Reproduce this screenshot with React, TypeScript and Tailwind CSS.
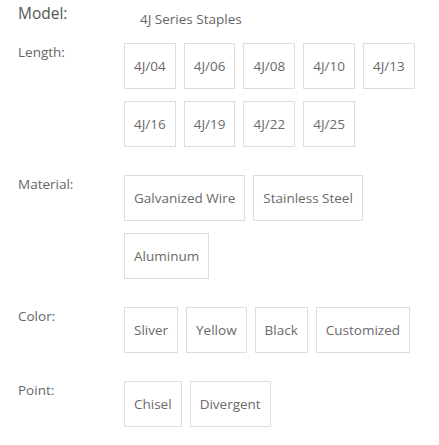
import React from 'react';

const groups = [
    { label: 'Length:', options: ['4J/04', '4J/06', '4J/08', '4J/10', '4J/13', '4J/16', '4J/19', '4J/22', '4J/25'] },
    { label: 'Material:', options: ['Galvanized Wire', 'Stainless Steel', 'Aluminum'] },
    { label: 'Color:', options: ['Sliver', 'Yellow', 'Black', 'Customized'] },
    { label: 'Point:', options: ['Chisel', 'Divergent'] },
];

export default function App() {
    return (
        <div className="min-h-[445px] w-[439px] bg-white pt-[2px] pl-[18px] font-['Open_Sans',sans-serif]">
            {/* Model */}
            <div className="flex items-start mb-[15px]">
                <div className="w-[106px] text-[15.5px] leading-[22px] text-[#555]">Model:</div>
                <div className="mt-[8px] pl-[16px] text-[13.5px] leading-[18px] text-[#666]">4J Series Staples</div>
            </div>

            {groups.map((group) => (
                <div key={group.label} className="flex items-start mb-[28px]">
                    <div className="w-[106px] shrink-0 text-[13.5px] leading-[18px] text-[#666]">{group.label}</div>
                    <div className="flex flex-1 flex-wrap gap-x-2 gap-y-3 pr-[10px]">
                        {group.options.map((opt) => (
                            <div
                                key={opt}
                                className="h-[46px] flex items-center px-[9px] border border-[#dddddd] text-[13.5px] leading-[18px] text-[#6a6a6a]"
                            >
                                {opt}
                            </div>
                        ))}
                    </div>
                </div>
            ))}
        </div>
    );
}
